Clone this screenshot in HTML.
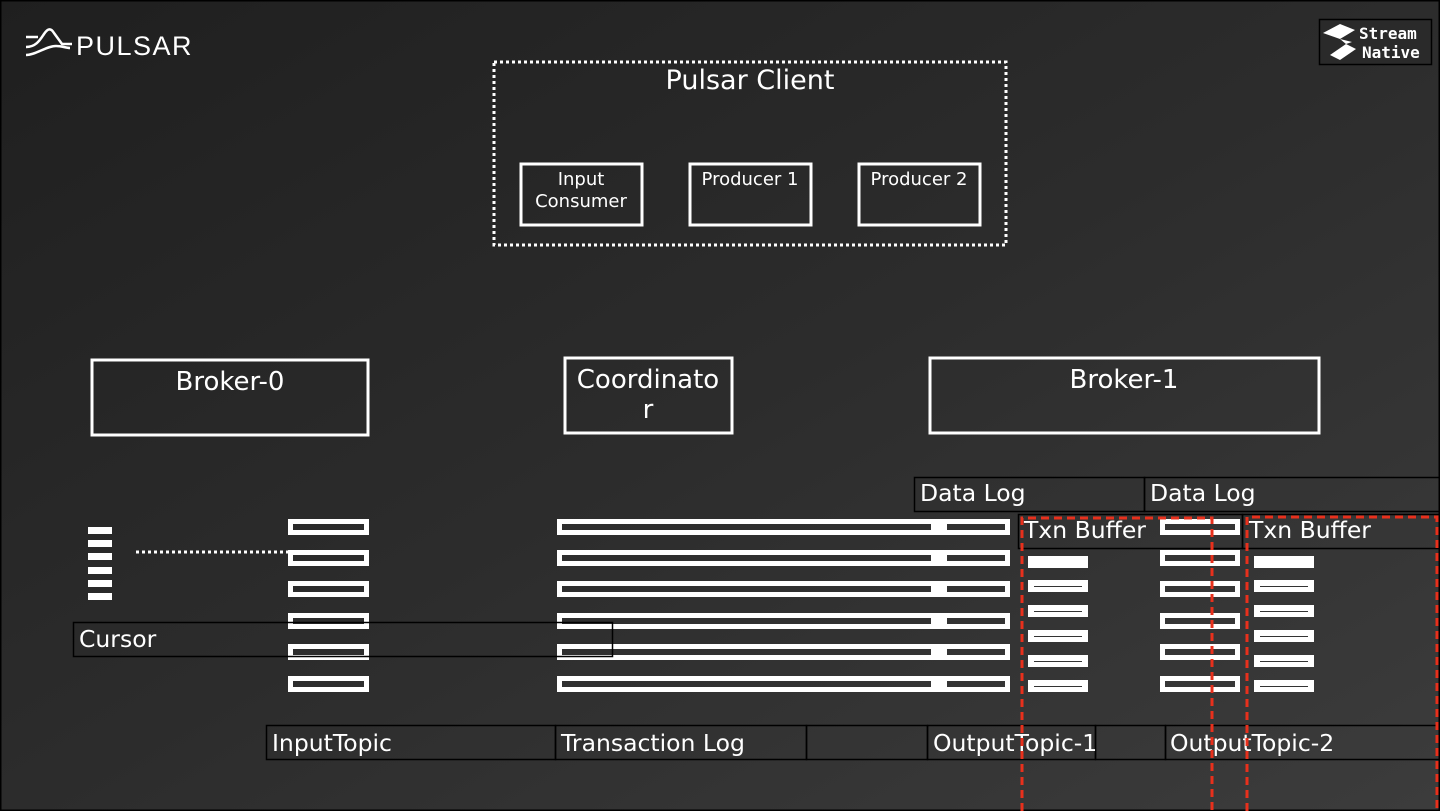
<!DOCTYPE html>
<html><head><style>
html,body{margin:0;padding:0;width:1440px;height:811px;overflow:hidden;background:#2a2a2a}
svg{display:block}
text{font-family:"DejaVu Sans","Liberation Sans",sans-serif;fill:#fff}
</style></head><body>
<svg width="1440" height="811" viewBox="0 0 1440 811" xmlns="http://www.w3.org/2000/svg">
<defs>
<linearGradient id="bg" x1="0" y1="0" x2="1" y2="1">
<stop offset="0" stop-color="#1f1f1f"/><stop offset="0.5" stop-color="#2c2c2c"/><stop offset="1" stop-color="#3c3c3c"/>
</linearGradient>
</defs>
<rect x="0" y="0" width="1440" height="811" fill="url(#bg)" stroke="#000" stroke-width="3"/>

<!-- Pulsar logo -->
<g fill="none" stroke="#fff" stroke-width="2.5">
<path d="M26 37 H38 M26 47 C36 47 40 40 44 34 C48 28 51 28 54 33 L62 44 H72"/>
<path d="M26 55 C36 55 46 46 56 46 C62 46 66 48 70 48"/>
</g>
<text x="76" y="55" font-size="27" letter-spacing="1.5" style="font-family:'Liberation Sans',sans-serif">PULSAR</text>

<!-- StreamNative -->
<rect x="1319.5" y="19.5" width="112" height="45" fill="#2a2a2a" stroke="#000" stroke-width="1.5"/>
<polygon points="1323,33 1340,24 1355,30 1340,39" fill="#fff"/>
<polygon points="1330,55 1346,44 1356,49 1340,60" fill="#fff"/>
<polygon points="1340,39 1352,42 1346,44" fill="#fff"/>
<text x="1359" y="39" font-size="16" font-weight="bold" style="font-family:'DejaVu Sans Mono',monospace">Stream</text>
<text x="1362" y="58" font-size="16" font-weight="bold" style="font-family:'DejaVu Sans Mono',monospace">Native</text>

<!-- Pulsar client -->
<rect x="494" y="62" width="512" height="183" fill="none" stroke="#fff" stroke-width="3" stroke-dasharray="3 3"/>
<text x="750" y="89" font-size="27" text-anchor="middle">Pulsar Client</text>
<g fill="none" stroke="#fff" stroke-width="3">
<rect x="521" y="164" width="121" height="61"/>
<rect x="690" y="164" width="121" height="61"/>
<rect x="859" y="164" width="121" height="61"/>
</g>
<text x="581" y="185" font-size="18" text-anchor="middle">Input</text>
<text x="581" y="207" font-size="18" text-anchor="middle">Consumer</text>
<text x="750" y="185" font-size="18" text-anchor="middle">Producer 1</text>
<text x="919" y="185" font-size="18" text-anchor="middle">Producer 2</text>

<!-- Brokers -->
<g fill="none" stroke="#fff" stroke-width="3">
<rect x="92" y="360" width="276" height="75"/>
<rect x="565" y="358" width="167" height="75"/>
<rect x="930" y="358" width="389" height="75"/>
</g>
<text x="230" y="390" font-size="26" text-anchor="middle">Broker-0</text>
<text x="648" y="388" font-size="26" text-anchor="middle">Coordinato</text>
<text x="648" y="418" font-size="26" text-anchor="middle">r</text>
<text x="1124" y="388" font-size="26" text-anchor="middle">Broker-1</text>

<!-- cursor bars -->
<g fill="#fff">
<rect x="88" y="527" width="24" height="7"/>
<rect x="88" y="540" width="24" height="7"/>
<rect x="88" y="553" width="24" height="7"/>
<rect x="88" y="567" width="24" height="7"/>
<rect x="88" y="580" width="24" height="7"/>
<rect x="88" y="593" width="24" height="7"/>
</g>
<line x1="136" y1="552" x2="290" y2="552" stroke="#fff" stroke-width="3" stroke-dasharray="3 3"/>

<!-- bar rows -->
<g fill="none" stroke="#fff" stroke-width="5">
<rect x="290.5" y="521.5" width="76" height="11"/>
<rect x="290.5" y="552.5" width="76" height="11"/>
<rect x="290.5" y="583.5" width="76" height="11"/>
<rect x="290.5" y="615.5" width="76" height="11"/>
<rect x="290.5" y="646.5" width="76" height="11"/>
<rect x="290.5" y="678.5" width="76" height="11"/>
<rect x="559.5" y="521.5" width="374" height="11"/>
<rect x="559.5" y="552.5" width="374" height="11"/>
<rect x="559.5" y="583.5" width="374" height="11"/>
<rect x="559.5" y="615.5" width="374" height="11"/>
<rect x="559.5" y="646.5" width="374" height="11"/>
<rect x="559.5" y="678.5" width="374" height="11"/>
<rect x="944.5" y="521.5" width="63" height="11"/>
<rect x="944.5" y="552.5" width="63" height="11"/>
<rect x="944.5" y="583.5" width="63" height="11"/>
<rect x="944.5" y="615.5" width="63" height="11"/>
<rect x="944.5" y="646.5" width="63" height="11"/>
<rect x="944.5" y="678.5" width="63" height="11"/>
<rect x="1162.5" y="521.5" width="75" height="11"/>
<rect x="1162.5" y="552.5" width="75" height="11"/>
<rect x="1162.5" y="583.5" width="75" height="11"/>
<rect x="1162.5" y="615.5" width="75" height="11"/>
<rect x="1162.5" y="646.5" width="75" height="11"/>
<rect x="1162.5" y="678.5" width="75" height="11"/>
</g>
<g fill="#fff">
<rect x="936" y="519" width="8" height="16"/><rect x="936" y="550" width="8" height="16"/>
<rect x="936" y="581" width="8" height="16"/><rect x="936" y="613" width="8" height="16"/>
<rect x="936" y="644" width="8" height="16"/><rect x="936" y="676" width="8" height="16"/>
<rect x="1028" y="556" width="60" height="12"/>
<rect x="1254" y="556" width="60" height="12"/>
<rect x="1028" y="580" width="60" height="12"/><rect x="1028" y="605" width="60" height="12"/>
<rect x="1028" y="630" width="60" height="12"/><rect x="1028" y="655" width="60" height="12"/>
<rect x="1028" y="680" width="60" height="12"/>
<rect x="1254" y="580" width="60" height="12"/><rect x="1254" y="605" width="60" height="12"/>
<rect x="1254" y="630" width="60" height="12"/><rect x="1254" y="655" width="60" height="12"/>
<rect x="1254" y="680" width="60" height="12"/>
</g>
<g stroke="#333" stroke-width="1">
<line x1="1034" y1="586.5" x2="1082" y2="586.5"/><line x1="1034" y1="611.5" x2="1082" y2="611.5"/>
<line x1="1034" y1="636.5" x2="1082" y2="636.5"/><line x1="1034" y1="661.5" x2="1082" y2="661.5"/>
<line x1="1034" y1="686.5" x2="1082" y2="686.5"/>
<line x1="1260" y1="586.5" x2="1308" y2="586.5"/><line x1="1260" y1="611.5" x2="1308" y2="611.5"/>
<line x1="1260" y1="636.5" x2="1308" y2="636.5"/><line x1="1260" y1="661.5" x2="1308" y2="661.5"/>
<line x1="1260" y1="686.5" x2="1308" y2="686.5"/>
</g>

<!-- label boxes -->
<g fill="none" stroke="#000" stroke-width="1.5">
<rect x="73.5" y="622.5" width="539" height="34"/>
<rect x="914.5" y="477.5" width="230" height="34"/>
<rect x="1144.5" y="477.5" width="300" height="34"/>
<rect x="1018.5" y="514.5" width="224" height="34"/>
<rect x="1242.5" y="514.5" width="200" height="34"/>
<rect x="266.5" y="725.5" width="289" height="34"/>
<rect x="555.5" y="725.5" width="251" height="34"/>
<rect x="806.5" y="725.5" width="121" height="34"/>
<rect x="927.5" y="725.5" width="168" height="34"/>
<rect x="1095.5" y="725.5" width="70" height="34"/>
<rect x="1165.5" y="725.5" width="280" height="34"/>
</g>
<g font-size="23.5">
<text x="79" y="647">Cursor</text>
<text x="920" y="501">Data Log</text>
<text x="1150" y="501">Data Log</text>
<text x="1024" y="538">Txn Buffer</text>
<text x="1249" y="538">Txn Buffer</text>
<text x="272" y="751">InputTopic</text>
<text x="561" y="751">Transaction Log</text>
<text x="933" y="751">OutputTopic-1</text>
<text x="1170" y="751">OutputTopic-2</text>
</g>

<!-- red dashed -->
<g fill="none" stroke="#e8301c" stroke-width="3" stroke-dasharray="8 5">
<path d="M1022 811 V518 H1212 V811"/>
<path d="M1247 811 V517 H1437 V811"/>
</g>
</svg>
</body></html>
